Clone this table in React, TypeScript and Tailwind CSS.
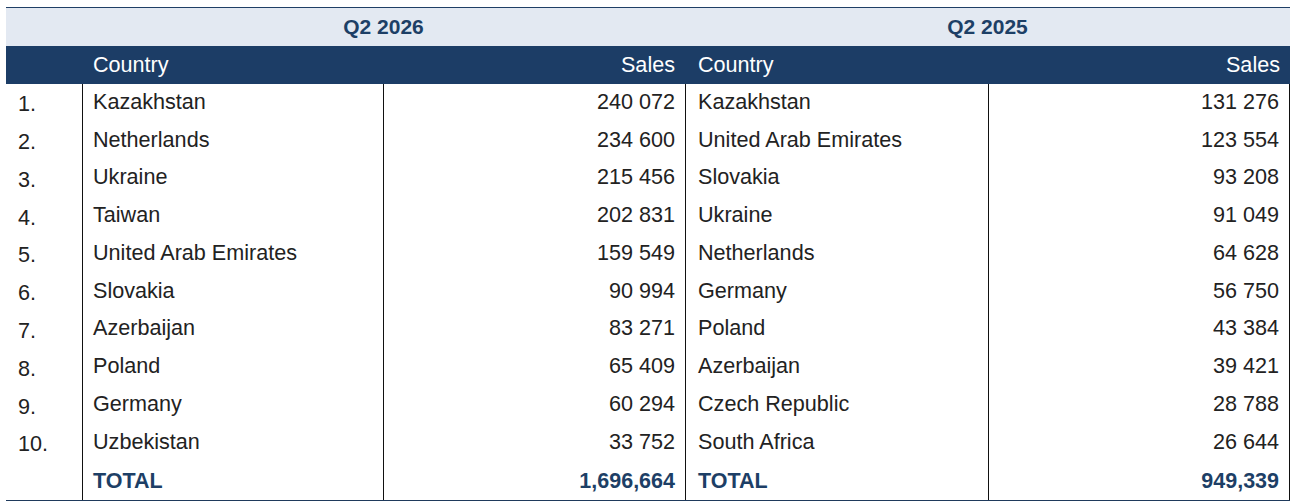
import React from "react";

const left = [
  ["Kazakhstan", "240 072"],
  ["Netherlands", "234 600"],
  ["Ukraine", "215 456"],
  ["Taiwan", "202 831"],
  ["United Arab Emirates", "159 549"],
  ["Slovakia", "90 994"],
  ["Azerbaijan", "83 271"],
  ["Poland", "65 409"],
  ["Germany", "60 294"],
  ["Uzbekistan", "33 752"],
];
const right = [
  ["Kazakhstan", "131 276"],
  ["United Arab Emirates", "123 554"],
  ["Slovakia", "93 208"],
  ["Ukraine", "91 049"],
  ["Netherlands", "64 628"],
  ["Germany", "56 750"],
  ["Poland", "43 384"],
  ["Azerbaijan", "39 421"],
  ["Czech Republic", "28 788"],
  ["South Africa", "26 644"],
];

const cols = "grid grid-cols-[76px_301px_302px_303px_302px]";

export default function App() {
  return (
    <div className="bg-white w-[1292px] h-[502px] pt-[7px] pl-[6px] font-['Liberation_Sans',Arial,sans-serif] text-[21.6px] text-[#222]">
      <div className="w-[1284px]">
        <div className={`${cols} h-[39px] border-t border-[#1f3f66] bg-[#e3e9f2] text-[#1d3f66] font-bold text-[21px]`}>
          <div />
          <div className="col-span-2 flex items-center justify-center">Q2 2026</div>
          <div className="col-span-2 flex items-center justify-center">Q2 2025</div>
        </div>
        <div className={`${cols} h-[38px] bg-[#1c3d66] text-white`}>
          <div />
          <div className="flex items-center pl-[11px] pt-[1px]">Country</div>
          <div className="flex items-center justify-end pr-[10px] pt-[1px]">Sales</div>
          <div className="flex items-center pl-[13px] pt-[1px]">Country</div>
          <div className="flex items-center justify-end pr-[10px] pt-[1px]">Sales</div>
        </div>
        <div className="border-b border-[#1f3a5c]">
          {left.map((l, i) => (
            <div key={i} className={`${cols} h-[37.8px]`}>
              <div className="flex items-center pl-[12px] pt-[3px]">{i + 1}.</div>
              <div className="flex items-center pl-[10px] pb-[2px] border-l border-[#111]">{l[0]}</div>
              <div className="flex items-center justify-end pr-[10px] pb-[2px] border-l border-[#111]">{l[1]}</div>
              <div className="flex items-center pl-[12px] pb-[2px] border-l border-[#111]">{right[i][0]}</div>
              <div className="flex items-center justify-end pr-[10px] pb-[2px] border-l border-r border-[#111]">{right[i][1]}</div>
            </div>
          ))}
          <div className={`${cols} h-[38px] text-[#1d3f66] font-bold text-[21.5px]`}>
            <div />
            <div className="flex items-center pl-[10px] border-l border-[#111]">TOTAL</div>
            <div className="flex items-center justify-end pr-[10px] border-l border-[#111]">1,696,664</div>
            <div className="flex items-center pl-[12px] border-l border-[#111]">TOTAL</div>
            <div className="flex items-center justify-end pr-[10px] border-l border-r border-[#111]">949,339</div>
          </div>
        </div>
      </div>
    </div>
  );
}
